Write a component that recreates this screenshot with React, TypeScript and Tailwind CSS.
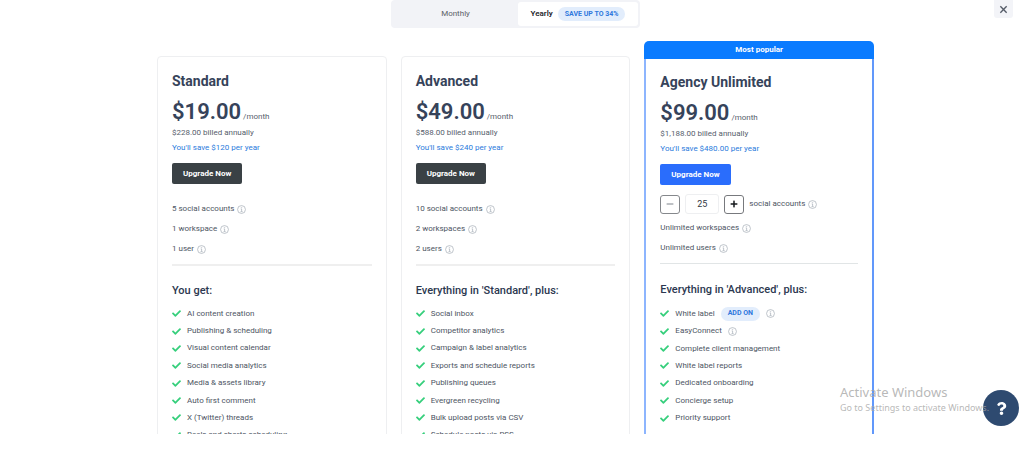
import { useState, type ReactNode } from "react";
import { FaCheck, FaMinus, FaPlus, FaQuestion } from "react-icons/fa";

type Limit = { label: string; stepper?: boolean };
type Feature = { label: string; addOn?: boolean; info?: boolean };
type Plan = {
  name: string;
  price: string;
  billed: string;
  save: string;
  limits: Limit[];
  heading: string;
  features: Feature[];
  popular?: boolean;
};

const plans: Plan[] = [
  {
    name: "Standard",
    price: "$19.00",
    billed: "$228.00 billed annually",
    save: "You'll save $120 per year",
    limits: [{ label: "5 social accounts" }, { label: "1 workspace" }, { label: "1 user" }],
    heading: "You get:",
    features: [
      { label: "AI content creation" },
      { label: "Publishing & scheduling" },
      { label: "Visual content calendar" },
      { label: "Social media analytics" },
      { label: "Media & assets library" },
      { label: "Auto first comment" },
      { label: "X (Twitter) threads" },
      { label: "Reels and shorts scheduling" },
    ],
  },
  {
    name: "Advanced",
    price: "$49.00",
    billed: "$588.00 billed annually",
    save: "You'll save $240 per year",
    limits: [{ label: "10 social accounts" }, { label: "2 workspaces" }, { label: "2 users" }],
    heading: "Everything in 'Standard', plus:",
    features: [
      { label: "Social inbox" },
      { label: "Competitor analytics" },
      { label: "Campaign & label analytics" },
      { label: "Exports and schedule reports" },
      { label: "Publishing queues" },
      { label: "Evergreen recycling" },
      { label: "Bulk upload posts via CSV" },
      { label: "Schedule posts via RSS" },
    ],
  },
  {
    name: "Agency Unlimited",
    price: "$99.00",
    billed: "$1,188.00 billed annually",
    save: "You'll save $480.00 per year",
    limits: [
      { label: "social accounts", stepper: true },
      { label: "Unlimited workspaces" },
      { label: "Unlimited users" },
    ],
    heading: "Everything in 'Advanced', plus:",
    features: [
      { label: "White label", addOn: true, info: true },
      { label: "EasyConnect", info: true },
      { label: "Complete client management" },
      { label: "White label reports" },
      { label: "Dedicated onboarding" },
      { label: "Concierge setup" },
      { label: "Priority support" },
    ],
    popular: true,
  },
];

function Info() {
  return (
    <svg viewBox="0 0 16 16" className="size-[9px] shrink-0 text-[#a9afb9]" fill="none" stroke="currentColor" aria-hidden="true">
      <circle cx="8" cy="8" r="7" strokeWidth="1.3" />
      <path d="M6.6 7H8.2V11.6M6.3 11.8H10" strokeWidth="1.3" />
      <circle cx="8" cy="4.5" r="0.6" strokeWidth="0.9" />
    </svg>
  );
}

function Pill({ children }: { children: ReactNode }) {
  return (
    <span className="flex h-3.5 items-center rounded-full bg-[#e2edfc] px-[7px] text-[7px] font-bold text-[#2f78dc]">
      {children}
    </span>
  );
}

function AccountStepper() {
  const [count, setCount] = useState(25);
  return (
    <>
      <button
        type="button"
        aria-label="Fewer social accounts"
        onClick={() => setCount(Math.max(25, count - 5))}
        className="flex h-[19px] w-5 items-center justify-center rounded-[3px] border border-[#85888c] text-[#a9adb3]"
      >
        <FaMinus className="size-2" />
      </button>
      <input
        aria-label="Number of social accounts"
        value={count}
        onChange={(e) => setCount(Number(e.target.value) || 0)}
        className="h-5 w-[34px] rounded-[3px] border border-[#eeeff1] text-center text-[9px] text-[#333a45]"
      />
      <button
        type="button"
        aria-label="More social accounts"
        onClick={() => setCount(count + 5)}
        className="flex h-[19px] w-5 items-center justify-center rounded-[3px] border border-[#77797d] text-[#15181c]"
      >
        <FaPlus className="size-2" />
      </button>
    </>
  );
}

function PlanCard({ plan }: { plan: Plan }) {
  return (
    <section className="min-w-0 flex-1">
      {plan.popular && (
        <div className="h-[18px] rounded-t-[5px] bg-[#0a7bff] text-center text-[8px] leading-[18px] font-bold text-white">
          Most popular
        </div>
      )}
      <div
        className={
          plan.popular
            ? "min-h-[440px] border-x-2 border-l-[#8db5fe] border-r-[#6198fb] px-[14px] pt-[13px]"
            : "mt-[15px] min-h-[440px] rounded-t border border-[#eeeff1] px-[14px] pt-[14px]"
        }
      >
        <h2 className="text-[14px] leading-5 font-bold text-[#36435a]">{plan.name}</h2>
        <p className="mt-[7px] flex h-7 items-baseline gap-0.5 leading-7">
          <span className="text-[22px] font-semibold text-[#36435a]">{plan.price}</span>
          <span className="text-[8px] text-[#565e6c]">/month</span>
        </p>
        <p className="-mt-px text-[8px] leading-[15px] text-[#565e6c]">{plan.billed}</p>
        <p className="text-[8px] leading-[15px] text-[#2b7bdc]">{plan.save}</p>
        <button
          type="button"
          className={
            plan.popular
              ? "mt-2 block h-[21px] rounded-[2px] bg-[#2a6dfc] px-[11px] text-[8px] font-bold text-white"
              : "mt-2 block h-[21px] rounded-[2px] bg-[#3a4145] px-[11px] text-[8px] font-bold text-white"
          }
        >
          Upgrade Now
        </button>
        <ul className={plan.popular ? "mt-[9px] text-[8px] text-[#4d5563]" : "mt-[15px] text-[8px] text-[#4d5563]"}>
          {plan.limits.map((limit) =>
            limit.stepper ? (
              <li key={limit.label} className="mb-1 flex h-5 items-center gap-[5px]">
                <AccountStepper />
                <span className="flex items-center gap-[3px]">
                  {limit.label}
                  <Info />
                </span>
              </li>
            ) : (
              <li key={limit.label} className="flex h-5 items-center gap-[3px]">
                {limit.label}
                <Info />
              </li>
            ),
          )}
        </ul>
        <hr className={plan.popular ? "mt-[5px] mb-[18px] border-t border-[#e1e5e6]" : "mt-[5px] mb-[17px] border-t-2 border-[#efefef]"} />
        <h3 className="text-[11px] leading-4 font-medium text-[#2c3850]">{plan.heading}</h3>
        <ul
          className={
            plan.popular
              ? "mt-[7px] grid h-[122px] auto-rows-fr text-[8px] text-[#4d5563]"
              : "mt-[6px] grid h-[139px] auto-rows-fr text-[8px] text-[#4d5563]"
          }
        >
          {plan.features.map((feature) => (
            <li key={feature.label} className="flex items-center gap-1.5">
              <FaCheck className="size-[9px] shrink-0 text-[#36cf7c]" />
              {feature.label}
              {feature.addOn && <Pill>ADD ON</Pill>}
              {feature.info && <Info />}
            </li>
          ))}
        </ul>
      </div>
    </section>
  );
}

export default function App() {
  const [yearly, setYearly] = useState(true);
  return (
    <div className="relative flex h-screen flex-col bg-white pb-[19px] font-[Roboto,'Liberation_Sans',sans-serif]">
      <main className="flex min-h-0 flex-1 flex-col items-center overflow-hidden pl-[7px]">
        <div className="flex h-7 w-[249px] shrink-0 rounded bg-[#f2f3f7] p-0.5 text-[8px]">
          <button type="button" aria-pressed={!yearly} onClick={() => setYearly(false)} className="flex-1 text-[#5b5f66]">
            Monthly
          </button>
          <button
            type="button"
            aria-pressed={yearly}
            onClick={() => setYearly(true)}
            className="flex w-[120px] items-center justify-center gap-[5px] rounded-[3px] bg-white font-semibold text-[#22252a]"
          >
            Yearly
            <Pill>SAVE UP TO 34%</Pill>
          </button>
        </div>
        <div className="mt-[13px] flex w-full max-w-[717px] shrink-0 gap-3.5">
          {plans.map((plan) => (
            <PlanCard key={plan.name} plan={plan} />
          ))}
        </div>
      </main>

      <button
        type="button"
        aria-label="Close"
        className="absolute top-0 right-[11px] flex h-[18px] w-[19px] items-center justify-center rounded-b-[3px] bg-[#f3f4f8] text-[#555c68]"
      >
        <svg viewBox="0 0 10 10" className="size-[9px]" stroke="currentColor" strokeWidth="1.5" aria-hidden="true">
          <path d="M1.5 1.5L8.5 8.5M8.5 1.5L1.5 8.5" />
        </svg>
      </button>

      <button
        type="button"
        aria-label="Help"
        className="absolute right-[5px] bottom-[27px] flex size-9 items-center justify-center rounded-full bg-[#2e4a70] text-white"
      >
        <FaQuestion className="size-[13px]" />
      </button>

      <div className="pointer-events-none absolute right-7 bottom-[38px] w-[156px] font-['Noto_Sans','Open_Sans',sans-serif] whitespace-nowrap text-[#a6a6a6]/80">
        <p className="text-[13px] leading-[18px]">Activate Windows</p>
        <p className="text-[9px] leading-[14px]">Go to Settings to activate Windows.</p>
      </div>
    </div>
  );
}
